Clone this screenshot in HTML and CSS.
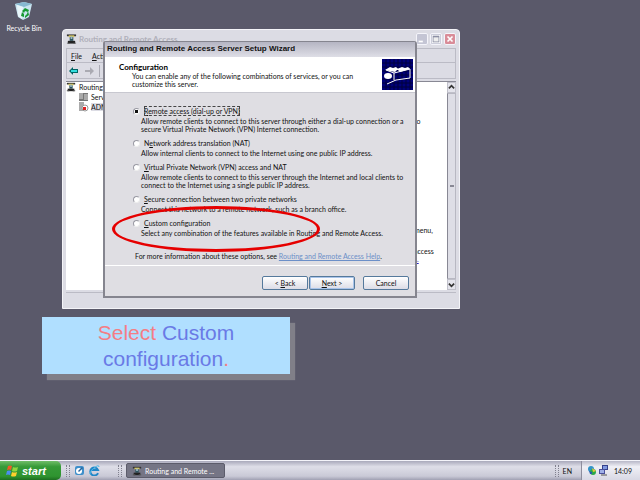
FILE: index.html
```
<!DOCTYPE html>
<html lang="en">
<head>
    <meta charset="UTF-8">
    <meta name="viewport" content="width=device-width, initial-scale=1.0">
    <title>Routing and Remote Access</title>
    <link rel="stylesheet" href="styles.css">
</head>
<body>

<!-- Shared icons -->
<svg class="sprite" aria-hidden="true">
    <symbol id="server" viewBox="0 0 12 12">
        <path d="M1 1h10v2H1z" fill="#333"/>
        <path d="M3 2h6v2H3z" fill="#d8c860"/>
        <path d="M4 4h4v4H4z" fill="#2c5560"/>
        <path d="M5 3h2v3H5z" fill="#9db8c0"/>
        <path d="M2 8h8v3H2z" fill="#222"/>
        <path d="M1 10h3v1H1zM8 10h3v1H8z" fill="#555"/>
    </symbol>
</svg>

<main class="desktop">
    <div class="shortcut">
        <svg width="20" height="20" viewBox="0 0 20 20">
            <path d="M1 3l9-2 8 2-3 13-6 3-5-3z" fill="#c9e4ef"/>
            <path d="M1 3l9-2 8 2-8 3z" fill="#87b9d1"/>
            <path d="M3 4l6 2-1 12-4-3z" fill="#e8f6fa"/>
            <path d="M8 10l3-3 4 2-1 2-3-1-1 2zM14 10l1 4-4 3v-2l2-2zM10 16l-3-1 1-4 2 2z" fill="#169a32"/>
        </svg>
        <span>Recycle Bin</span>
    </div>

    <!-- Console window -->
    <section class="console">
        <div class="console-title">
            <svg width="11" height="12"><use href="#server"/></svg>
            <h2>Routing and Remote Access</h2>
            <div class="window-buttons">
                <button aria-label="Minimize"><svg viewBox="0 0 12 12"><path d="M2 9h5" stroke="#fff" stroke-width="2"/></svg></button>
                <button aria-label="Maximize"><svg viewBox="0 0 12 12"><path d="M1 1h10v10H1z" fill="#fff"/><path d="M2 2h8v8H2z" fill="#8c8fa4"/><path d="M3 4h6v5H3z" fill="#eee"/></svg></button>
                <button class="close" aria-label="Close"><svg viewBox="0 0 12 12"><path d="M3 3l6 6M9 3l-6 6" stroke="#fff" stroke-width="2"/></svg></button>
            </div>
        </div>
        <nav class="console-menu">
            <span><u>F</u>ile</span>
            <span><u>A</u>ction</span>
        </nav>
        <div class="console-tools">
            <svg width="10" height="8" viewBox="0 0 10 8"><path d="M0 4l4-4v2h5v4H4v2z" fill="#066"/><path d="M2 4h6" stroke="#3dd" stroke-width="2"/></svg>
            <svg width="10" height="8" viewBox="0 0 10 8"><path d="M10 4L6 0v3H1v2h5v3z" fill="#aaaab2"/></svg>
            <i class="divider"></i>
        </div>
        <div class="console-body">
            <ul class="tree">
                <li><svg width="10" height="10"><use href="#server"/></svg>Routing</li>
                <li class="child"><svg width="11" height="10" viewBox="0 0 11 10"><path d="M1 1h9v8H1z" fill="#777"/><path d="M1 2h4M1 4h4M1 6h4M6 3h4M6 5h4M6 7h4" stroke="#ddd"/></svg>Server</li>
                <li class="child"><svg width="11" height="10" viewBox="0 0 11 10"><path d="M1 0h5v9H1z" fill="#aaa"/><circle cx="7" cy="6" r="3" fill="#fff" stroke="#999"/><path d="M5 5h3v3H5z" fill="#d22"/></svg><span class="selected">ADMIN</span></li>
            </ul>
            <div class="details">
                <p>to</p>
                <p>menu,</p>
                <p>access<br><a href="#">s.</a></p>
            </div>
            <div class="scrollbar">
                <button aria-label="Scroll up"><svg viewBox="0 0 8 8"><path d="M1 5l3-3 3 3" fill="none" stroke="#333" stroke-width="2"/></svg></button>
                <i class="thumb"></i>
                <button aria-label="Scroll down"><svg viewBox="0 0 8 8"><path d="M1 3l3 3 3-3" fill="none" stroke="#333" stroke-width="2"/></svg></button>
            </div>
        </div>
        <div class="console-status"></div>
    </section>

    <!-- Setup wizard -->
    <form class="wizard" onsubmit="return false">
        <h1>Routing and Remote Access Server Setup Wizard</h1>
        <header>
            <div>
                <h2>Configuration</h2>
                <p>You can enable any of the following combinations of services, or you can<br>customize this server.</p>
            </div>
            <svg width="31" height="31" viewBox="0 0 31 31">
                <path d="M0 0h31v31H0z" fill="#000078"/>
                <path d="M0 4h31M0 8h31M0 12h31M0 16h31M0 20h31M0 24h31M0 28h31M4 0v31M8 0v31M12 0v31M16 0v31M20 0v31M24 0v31M28 0v31" stroke="#00003c"/>
                <path d="M3 11l5-3 3 1 3-1 2 2-3 3zM15 10l5-2 3 1 3-1 2 2-10 3z" fill="#fff"/>
                <path d="M4 11l8 3 16-4v9l-14 2-9 4M12 14v7" fill="none" stroke="#fff" stroke-width="1"/>
                <ellipse cx="6" cy="17" rx="4" ry="3" fill="#fff"/>
            </svg>
        </header>
        <div class="wizard-body">
            <div class="options">
                <div class="option">
                    <input type="radio" name="config" id="remote" checked>
                    <label for="remote" class="focused"><u>R</u>emote access (dial-up or VPN)</label>
                    <p>Allow remote clients to connect to this server through either a dial-up connection or a<br>secure Virtual Private Network (VPN) Internet connection.</p>
                </div>
                <div class="option">
                    <input type="radio" name="config" id="nat">
                    <label for="nat">N<u>e</u>twork address translation (NAT)</label>
                    <p>Allow internal clients to connect to the Internet using one public IP address.</p>
                </div>
                <div class="option">
                    <input type="radio" name="config" id="vpn">
                    <label for="vpn"><u>V</u>irtual Private Network (VPN) access and NAT</label>
                    <p>Allow remote clients to connect to this server through the Internet and local clients to<br>connect to the Internet using a single public IP address.</p>
                </div>
                <div class="option">
                    <input type="radio" name="config" id="secure">
                    <label for="secure"><u>S</u>ecure connection between two private networks</label>
                    <p>Connect this network to a remote network, such as a branch office.</p>
                </div>
                <div class="option">
                    <input type="radio" name="config" id="custom">
                    <label for="custom"><u>C</u>ustom configuration</label>
                    <p>Select any combination of the features available in Routing and Remote Access.</p>
                </div>
            </div>
            <p class="more">For more information about these options, see <a href="#">Routing and Remote Access Help</a>.</p>
        </div>
        <footer>
            <div class="steps">
                <button type="button">&lt; <u>B</u>ack</button>
                <button type="submit" class="default"><u>N</u>ext &gt;</button>
            </div>
            <button type="button">Cancel</button>
        </footer>
    </form>

    <!-- Tutorial marks -->
    <div class="highlight"></div>
    <div class="callout"><span>Select</span> Custom configuration<span>.</span></div>
</main>

<div class="taskbar">
    <button class="start">
        <svg width="13" height="12" viewBox="0 0 13 12">
            <path d="M2 1q2-1 4 0l-1 4q-2-1-4 0z" fill="#f05a28"/>
            <path d="M7 2q2 1 5 0l-1 4q-3 1-5 0z" fill="#8fd640"/>
            <path d="M1 6q2-1 4 0l-1 4q-2-1-4 0z" fill="#4b8cf0"/>
            <path d="M6 7q2 1 5 0l-1 4q-3 1-5 0z" fill="#ffd02c"/>
        </svg>
        start
    </button>
    <div class="quick">
        <i class="grip"></i>
        <svg width="11" height="11" viewBox="0 0 11 11"><rect x="1" y="1" width="9" height="9" rx="2" fill="#3f8fca"/><circle cx="5" cy="6" r="3" fill="#fff"/><path d="M4 6l4-4 1 1-4 4z" fill="#28649c"/></svg>
        <svg width="11" height="11" viewBox="0 0 11 11"><path d="M9 8a4 4 0 1 1 0-3H3" fill="none" stroke="#2087c8" stroke-width="2"/><path d="M1 9Q0 7 5 3t5-1" fill="none" stroke="#48b4e4"/></svg>
    </div>
    <i class="grip"></i>
    <button class="task"><svg width="10" height="10"><use href="#server"/></svg>Routing and Remote ...</button>
    <div class="language"><i class="grip"></i>EN</div>
    <div class="tray">
        <svg width="10" height="11" viewBox="0 0 10 11"><circle cx="4" cy="4" r="3" fill="#3294c8"/><circle cx="6" cy="7" r="3" fill="#2ba84a"/><path d="M5 3l4 3-3 1z" fill="#e8c838"/><path d="M2 6l3 1v2H3z" fill="#2858b0"/></svg>
        <svg width="10" height="11" viewBox="0 0 10 11"><path d="M3 0h6v5H3z" fill="#35408c"/><path d="M4 1h4v3H4z" fill="#8098e0"/><path d="M0 4h6v5H0z" fill="#4a509c"/><path d="M1 5h4v3H1z" fill="#a0b0e8"/><path d="M2 10h6" stroke="#555"/></svg>
        <time>14:09</time>
    </div>
</div>

</body>
</html>
```

FILE: styles.css
```
* {
    box-sizing: border-box;
}
body {
    margin: 0;
    min-height: 100vh;
    display: flex;
    flex-direction: column;
    background-color: #5a596a;
    color: #111;
    font-family: Lato, "Liberation Sans", sans-serif;
    font-size: 7px;
    line-height: 8px;
    overflow: hidden;
}
h1, h2, p, ul {
    margin: 0;
    padding: 0;
}
button {
    font: inherit;
    color: inherit;
    padding: 0;
    margin: 0;
}
svg {
    display: block;
    flex: none;
}
.sprite {
    position: absolute;
    width: 0;
    height: 0;
}
.desktop {
    flex: 1;
    position: relative;
}
.shortcut {
    width: 48px;
    padding-top: 1px;
    display: flex;
    flex-direction: column;
    align-items: center;
    gap: 3px;
    color: #fff;
}

/* Console window */
.console {
    position: absolute;
    left: 62px;
    top: 29px;
    width: 398px;
    height: 280px;
    display: flex;
    flex-direction: column;
    padding: 0 3px 3px;
    border: 1px solid #f4f4f8;
    border-radius: 4px 4px 0 0;
    background-color: #dcdce4;
}
.console-title {
    height: 18px;
    display: flex;
    align-items: center;
    gap: 2px;
}
.console-title h2 {
    flex: 1;
    font-size: 8px;
    color: #b0b0ba;
}
.window-buttons {
    display: flex;
    gap: 2px;
}
.window-buttons button {
    width: 12px;
    height: 12px;
    border: 1px solid #f4f4fa;
    border-radius: 2px;
    background-color: #c4c5d4;
}
.window-buttons .close {
    background-color: #d98c98;
}
.console-menu {
    height: 15px;
    display: flex;
    align-items: center;
    gap: 10px;
    padding: 0 4px;
    border: 1px solid #bbbbc5;
}
.console-tools {
    height: 16px;
    display: flex;
    align-items: center;
    gap: 5px;
    padding: 0 2px;
    border: 1px solid #bbbbc5;
    border-top: 0;
}
.divider {
    height: 12px;
    border-left: 1px solid #aaaab4;
}
.console-body {
    flex: 1;
    margin-top: 2px;
    display: flex;
    background-color: #fff;
    border-top: 1px solid #888894;
}
.tree {
    flex: 1;
    list-style: none;
    white-space: nowrap;
}
.tree li {
    height: 10px;
    display: flex;
    align-items: center;
    gap: 3px;
}
.tree .child {
    padding-left: 12px;
    gap: 2px;
}
.tree .selected {
    background-color: #dcdce4;
}
.details {
    width: 33px;
    padding-top: 35px;
}
.details p:nth-child(2) {
    margin: 101px 0 13px;
}
.details a {
    color: #2222c8;
}
.scrollbar {
    width: 9px;
    display: flex;
    flex-direction: column;
    background-color: #f0f0f5;
}
.scrollbar button {
    height: 11px;
    border: 1px solid #c0c0ca;
    background-color: #e4e4ec;
}
.scrollbar .thumb {
    flex: 1;
    border: 1px solid #b8b8c2;
    border-left-color: #888894;
    background: linear-gradient(#888894, #888894) center / 4px 2px no-repeat, #dedee6;
}
.console-status {
    height: 13px;
    margin-top: 2px;
    border-top: 1px solid #bbbbc5;
}

/* Setup wizard */
.wizard {
    position: absolute;
    left: 103px;
    top: 41px;
    width: 314px;
    height: 257px;
    display: flex;
    flex-direction: column;
    border: 2px solid #85858f;
    border-top: 1px solid #85858f;
    border-radius: 3px 3px 0 0;
    background-color: #dfdee3;
}
.wizard h1 {
    height: 15px;
    padding-left: 2px;
    font-family: "Liberation Sans", Arial, sans-serif;
    font-size: 8px;
    line-height: 14px;
    background: linear-gradient(#b5b5c3, #dedee6);
}
.wizard header {
    height: 36px;
    display: flex;
    justify-content: space-between;
    padding: 2px 2px 0 14px;
    background-color: #fff;
    border-bottom: 1px solid #c8c8d0;
}
.wizard header h2 {
    padding-top: 4px;
    font-size: 8px;
    line-height: 9px;
    color: #000;
}
.wizard header p {
    padding-left: 13px;
}
.wizard-body {
    flex: 1;
    padding: 13px 8px 0 28px;
}
.options {
    display: grid;
    gap: 5px;
}
.option {
    display: grid;
    grid-template-columns: 7px 1fr;
    column-gap: 4px;
    row-gap: 1px;
    align-items: center;
}
.option input {
    appearance: none;
    width: 7px;
    height: 7px;
    margin: 0;
    border: 1px solid #9999a3;
    border-right-color: #eee;
    border-bottom-color: #eee;
    border-radius: 50%;
    background-color: #fff;
}
.option input:checked {
    background: radial-gradient(#111 40%, #fff 50%);
}
.option label {
    justify-self: start;
    line-height: 10px;
}
.option .focused {
    outline: 1px dashed #444;
    outline-offset: -1px;
}
.option p {
    grid-column: 1 / -1;
    padding-left: 8px;
}
.more {
    margin-top: 15px;
    padding-left: 2px;
}
.more a {
    color: #6c8fc8;
}
.wizard footer {
    height: 31px;
    display: flex;
    justify-content: flex-end;
    align-items: flex-start;
    gap: 8px;
    padding: 10px 6px 0;
    border-top: 1px solid #fff;
}
.steps {
    display: flex;
    gap: 1px;
}
.wizard footer button {
    width: 46px;
    height: 14px;
    border: 1px solid #55799c;
    border-radius: 2px;
    background: linear-gradient(#fff, #dcdce6);
}
.wizard footer .default {
    box-shadow: inset 0 0 0 1px #a9c4ea;
}

/* Tutorial marks */
.highlight {
    position: absolute;
    left: 112px;
    top: 206px;
    width: 208px;
    height: 46px;
    border: 3px solid #e60000;
    border-radius: 50%;
    pointer-events: none;
}
.callout {
    position: absolute;
    left: 42px;
    top: 317px;
    width: 248px;
    padding: 3px 40px 2px;
    background-color: #b0dfff;
    box-shadow: 5px 6px 1px #807f88;
    color: #6a7ae6;
    font-family: "Liberation Sans", Arial, sans-serif;
    font-size: 21px;
    line-height: 26px;
    text-align: center;
}
.callout span {
    color: #f47d85;
}

/* Taskbar */
.taskbar {
    height: 20px;
    display: flex;
    align-items: center;
    border-top: 1px solid #f4f4fa;
    background: linear-gradient(#a9a9bb, #dedee8 30%, #c9c9d6 80%, #a0a0b2);
}
.start {
    width: 61px;
    height: 100%;
    display: flex;
    align-items: center;
    gap: 3px;
    padding-left: 6px;
    border: 0;
    border-radius: 0 5px 5px 0;
    background: linear-gradient(#70bd68, #369a38 30%, #2f9430 80%, #1d6e20);
    color: #fff;
    font-family: "Liberation Sans", Arial, sans-serif;
    font-size: 11px;
    font-weight: bold;
    font-style: italic;
}
.quick {
    display: flex;
    align-items: center;
    gap: 4px;
    width: 57px;
    padding-left: 5px;
}
.grip {
    width: 4px;
    height: 12px;
    border: 1px dotted #80808e;
    border-width: 0 1px;
}
.task {
    width: 99px;
    height: 15px;
    display: flex;
    align-items: center;
    gap: 3px;
    margin-left: 4px;
    padding-left: 5px;
    border: 1px solid #5c5c6b;
    border-radius: 2px;
    background-color: #757585;
    color: #fff;
}
.language {
    margin-left: auto;
    display: flex;
    align-items: center;
    gap: 4px;
    padding-right: 9px;
}
.tray {
    align-self: stretch;
    display: flex;
    align-items: center;
    gap: 2px;
    padding: 0 8px 0 5px;
    border-left: 1px solid #8e8e9e;
    background: linear-gradient(#b8b8c8, #f0f0f6 30%, #d8d8e4);
}
.tray time {
    padding-left: 3px;
}
```
